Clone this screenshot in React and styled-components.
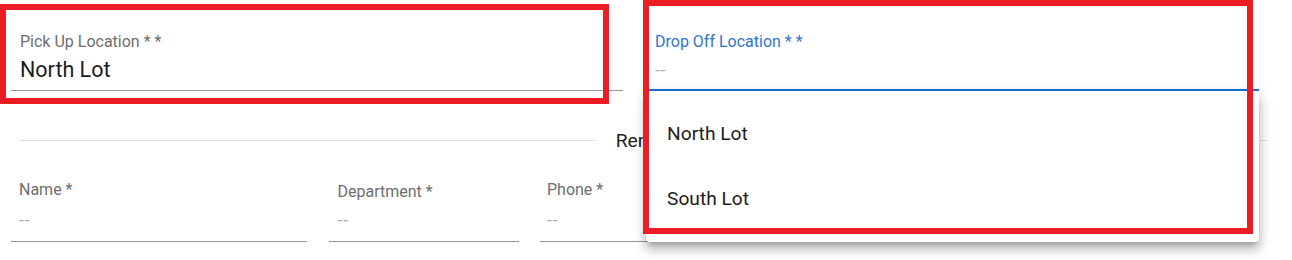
import React from "react";
import styled, { createGlobalStyle } from "styled-components";

const GlobalStyle = createGlobalStyle`
  html, body { margin: 0; padding: 0; background: #fff; }
  body { font-family: Roboto, "Noto Sans", Arial, sans-serif; }
  * { box-sizing: border-box; }
`;

const Page = styled.div`
  position: relative;
  width: 1292px;
  height: 260px;
  overflow: hidden;
  padding-top: 32px;
  background: #fff;
`;

const TopRow = styled.div`
  display: grid;
  grid-template-columns: 612px 613px;
  column-gap: 23px;
  padding-left: 11px;
`;

const BottomRow = styled.div`
  display: grid;
  grid-template-columns: 296px 190px 190px 499px;
  column-gap: 21.5px;
  padding-left: 11px;
  margin-top: 20px;
`;

const FieldWrap = styled.div`
  position: relative;
`;

const Field = styled.div`
  display: flex;
  flex-direction: column;
  padding: 0 0 ${(p) => (p.$focused ? p.$pad - 1 : p.$pad)}px ${(p) => p.$inset}px;
  border-bottom: ${(p) => (p.$focused ? "2px solid #1976d2" : "1px solid #949494")};
`;

const Label = styled.div`
  font-size: 16px;
  line-height: 20px;
  color: ${(p) => (p.$focused ? "#2f74cc" : "#6e6e6e")};
  margin-top: ${(p) => p.$shift}px;
  margin-bottom: ${(p) => p.$gap - p.$shift}px;
  white-space: nowrap;
`;

const Value = styled.div`
  font-size: ${(p) => (p.$empty ? 18 : 21.5)}px;
  line-height: 28px;
  color: ${(p) => (p.$empty ? "#b3b3b3" : "#1c1c1c")};
  letter-spacing: ${(p) => (p.$empty ? "0.5px" : "0")};
`;

const DividerRow = styled.div`
  display: flex;
  align-items: center;
  height: 40px;
  margin: 29px 24px 0 19px;
  font-size: 19.2px;
  color: #212121;
  &::before,
  &::after {
    content: "";
    flex: 1;
    border-top: 1px solid #e0e0e0;
  }
`;

const DividerText = styled.span`
  padding: 0 21px;
`;

const Menu = styled.ul`
  position: absolute;
  top: 100%;
  left: 0;
  right: 0;
  margin: 0;
  padding: 10px 0 11px;
  list-style: none;
  background: #fff;
  border-radius: 4px;
  box-shadow: 0px 5px 5px -3px rgba(0, 0, 0, 0.22),
    0px 8px 10px 1px rgba(0, 0, 0, 0.16), 0px 3px 14px 2px rgba(0, 0, 0, 0.12);
  z-index: 2;
`;

const MenuItem = styled.li`
  display: flex;
  align-items: center;
  height: 65px;
  padding-left: 21px;
  font-size: 19.2px;
  color: #212121;
`;

const Annotation = styled.div`
  position: absolute;
  left: ${(p) => p.$x}px;
  top: ${(p) => p.$y}px;
  width: ${(p) => p.$w}px;
  height: ${(p) => p.$h}px;
  border: 6px solid #ed1c24;
  pointer-events: none;
  z-index: 3;
`;

function TextField({ label, value, inset = 9, gap = 4, shift = 0, pad = 6, focused = false }) {
  const empty = !value;
  return (
    <Field $inset={inset} $focused={focused} $pad={pad}>
      <Label $gap={gap} $shift={shift} $focused={focused}>
        {label}
      </Label>
      <Value $empty={empty}>{empty ? "--" : value}</Value>
    </Field>
  );
}

export default function App() {
  return (
    <>
      <GlobalStyle />
      <Page>
        <TopRow>
          <FieldWrap>
            <TextField label="Pick Up Location * *" value="North Lot" />
          </FieldWrap>
          <FieldWrap>
            <TextField label="Drop Off Location * *" value="" focused />
            <Menu>
              <MenuItem>North Lot</MenuItem>
              <MenuItem>South Lot</MenuItem>
            </Menu>
          </FieldWrap>
        </TopRow>

        <DividerRow>
          <DividerText>Renter</DividerText>
        </DividerRow>

        <BottomRow>
          <TextField label="Name *" value="" inset={8} gap={6} pad={7} />
          <TextField label="Department *" value="" inset={9} gap={6} shift={2} pad={7} />
          <TextField label="Phone *" value="" inset={7} gap={6} pad={7} />
          <TextField label="Email *" value="" inset={8} gap={6} pad={7} />
        </BottomRow>

        <Annotation $x={0} $y={4} $w={609} $h={100} />
        <Annotation $x={643} $y={0} $w={610} $h={234} />
      </Page>
    </>
  );
}
